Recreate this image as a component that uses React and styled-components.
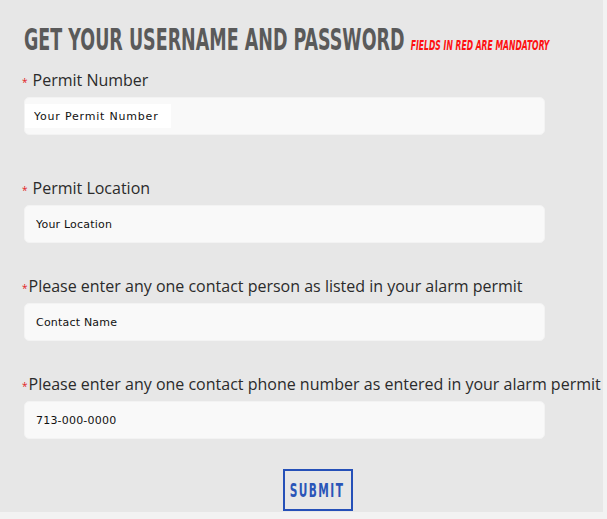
import React from 'react'
import styled, { createGlobalStyle } from 'styled-components'

const GlobalStyle = createGlobalStyle`
  html, body {
    margin: 0;
    padding: 0;
    background: #f2f2f2;
  }
`;

const fields = [
  { id: 'permit', label: 'Permit Number', placeholder: 'Your Permit Number', inner: true, spaced: true, extra: 10 },
  { id: 'location', label: 'Permit Location', placeholder: 'Your Location', spaced: true },
  { id: 'contact', label: 'Please enter any one contact person as listed in your alarm permit', placeholder: 'Contact Name' },
  { id: 'phone', label: 'Please enter any one contact phone number as entered in your alarm permit', placeholder: '713-000-0000' },
];

const App = () => {
  return (
    <>
      <GlobalStyle />
      <Panel>
        <Heading>
          <Squeeze>
            Get your username and password
            <Mandatory>Fields in red are mandatory</Mandatory>
          </Squeeze>
        </Heading>
        <Form onSubmit={(e) => e.preventDefault()}>
          {fields.map((f) => (
            <Field key={f.id} $extra={f.extra || 0}>
              <Label htmlFor={f.id}>
                <Star $spaced={f.spaced}>*</Star>{f.label}
              </Label>
              <InputBox>
                {f.inner
                  ? <InnerInput id={f.id} placeholder={f.placeholder} />
                  : <Input id={f.id} placeholder={f.placeholder} />}
              </InputBox>
            </Field>
          ))}
          <Actions>
            <Submit type="submit"><SubmitText>Submit</SubmitText></Submit>
          </Actions>
        </Form>
      </Panel>
    </>
  );
}

export default App;

const Panel = styled.div`
  width: 603px;
  height: 512px;
  box-sizing: border-box;
  background: #e7e7e7;
  padding: 20px 0 0 24px;
  overflow: hidden;
`;

const Heading = styled.h1`
  margin: 0;
  height: 38px;
  font-family: "DejaVu Sans Condensed", "DejaVu Sans", sans-serif;
  font-weight: 700;
  font-size: 31px;
  line-height: 38px;
  text-transform: uppercase;
  color: #5a5a5a;
  white-space: nowrap;
`;

const Squeeze = styled.span`
  display: inline-block;
  transform: scaleX(0.627);
  transform-origin: left center;
`;

const Mandatory = styled.span`
  margin-left: 10px;
  font-size: 13.6px;
  font-style: italic;
  font-weight: 700;
  color: #ff1010;
`;

const Form = styled.form`
  display: flex;
  flex-direction: column;
  margin-top: 11px;
`;

const Field = styled.div`
  display: flex;
  flex-direction: column;
  margin-bottom: ${p => 32 + p.$extra}px;
`;

const Label = styled.label`
  display: flex;
  align-items: baseline;
  margin-left: -2px;
  font-family: "Open Sans", "Noto Sans", sans-serif;
  font-size: 16px;
  line-height: 22px;
  color: #2b2b2b;
  white-space: nowrap;
`;

const Star = styled.span`
  color: #e21b1b;
  font-size: 10px;
  margin-right: ${p => (p.$spaced ? '5px' : '1px')};
`;

const InputBox = styled.div`
  margin-top: 4px;
  width: 521px;
  height: 38px;
  box-sizing: border-box;
  background: #f9f9f9;
  border: 1px solid #f3f3f3;
  border-radius: 5px;
  display: flex;
  align-items: center;
  padding-left: 11px;
`;

const Input = styled.input`
  border: none;
  background: transparent;
  outline: none;
  width: 100%;
  padding: 0;
  font-family: "DejaVu Sans", Verdana, sans-serif;
  font-size: 11px;
  letter-spacing: 0.2px;
  &::placeholder {
    color: #111111;
  }
`;

const InnerInput = styled(Input)`
  margin-left: -11px;
  width: 146px;
  height: 24px;
  background: #ffffff;
  padding-left: 9px;
  box-sizing: border-box;
  letter-spacing: 0.8px;
`;

const Actions = styled.div`
  display: flex;
  justify-content: center;
  width: 587px;
  margin-top: -2px;
`;

const Submit = styled.button`
  width: 70px;
  height: 42px;
  padding: 0;
  overflow: hidden;
  display: flex;
  align-items: center;
  justify-content: center;
  background: transparent;
  border: 2px solid #2550b8;
  color: #2a55b8;
  font-family: "DejaVu Sans Condensed", "DejaVu Sans", sans-serif;
  font-weight: 700;
  font-size: 19px;
  letter-spacing: 2.3px;
  text-transform: uppercase;
  cursor: pointer;
`;

const SubmitText = styled.span`
  display: inline-block;
  transform: scaleX(0.62);
  transform-origin: center;
`;
